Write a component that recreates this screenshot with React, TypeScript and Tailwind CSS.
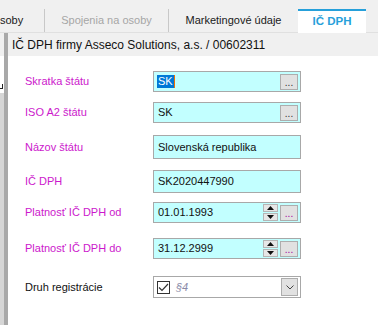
import { ReactNode } from "react";

const font = { fontFamily: '"Liberation Sans", Arial, sans-serif' };

function Dots({ purple }: { purple?: boolean }) {
  return (
    <div className="w-[18px] h-[16px] bg-[#e1e1e1] border border-[#adadad] flex items-end justify-center pb-[2px]">
      <span className={`text-[10px] leading-[8px] ${purple ? "text-[#a000a0]" : "text-[#333]"}`}>...</span>
    </div>
  );
}

function Spinner() {
  return (
    <div className="w-[15px] h-[17px] flex flex-col gap-[1px]">
      <div className="flex-1 bg-[#e6e6e6] border border-[#b5b5b5] flex items-center justify-center">
        <svg width="7" height="4" viewBox="0 0 7 4">
          <path d="M0 4 L3.5 0 L7 4 Z" fill="#111" />
        </svg>
      </div>
      <div className="flex-1 bg-[#e6e6e6] border border-[#b5b5b5] flex items-center justify-center">
        <svg width="7" height="4" viewBox="0 0 7 4">
          <path d="M0 0 L3.5 4 L7 0 Z" fill="#111" />
        </svg>
      </div>
    </div>
  );
}

function Row({
  label,
  black,
  mt,
  h,
  children,
}: {
  label: string;
  black?: boolean;
  mt: string;
  h: string;
  children: ReactNode;
}) {
  return (
    <div className={`flex items-center ${mt}`}>
      <div className={`w-[145px] pl-[17px] text-[11px] ${black ? "text-[#111]" : "text-[#cc18cc]"}`}>
        {label}
      </div>
      <div className={`w-[148px] ${h} border border-[#a8a8a8] flex items-center pl-[3px] pr-[2px] text-[11px] text-[#111]`}>
        {children}
      </div>
    </div>
  );
}

export default function App() {
  return (
    <div className="w-[378px] h-[325px] bg-white overflow-hidden flex flex-col" style={font}>
      {/* tabs */}
      <div className="h-[33px] bg-[#f0f0f0] border-b border-[#e0e0e0] flex items-end text-[11px] shrink-0">
        <div className="w-[44px] h-[23px] flex items-center">
          <span className="text-[#1a1a1a] whitespace-nowrap">soby</span>
        </div>
        <div className="w-[1px] h-[23px] bg-[#c8c8c8]" />
        <div className="w-[123px] h-[23px] flex items-center justify-center text-[#a6a6a6]">Spojenia na osoby</div>
        <div className="w-[1px] h-[23px] bg-[#c8c8c8]" />
        <div className="w-[129px] h-[23px] flex items-center justify-center text-[#1a1a1a]">Marketingové údaje</div>
        <div className="w-[68px] h-[24px] -mb-[1px] bg-white border-t-2 border-[#26a0da] flex items-center justify-center font-bold text-[11.5px] text-[#26a0da]">
          IČ DPH
        </div>
      </div>

      <div className="flex flex-1">
        <div className="w-[4px] flex flex-col">
          <div className="h-[23px] bg-[#f0f0f0]" />
          <div className="h-[37px] bg-white relative">
            <div className="absolute left-0 top-[32px] w-[3px] h-[1px] bg-[#222]" />
            <div className="absolute left-[2px] top-[28px] w-[1px] h-[5px] bg-[#222]" />
          </div>
          <div className="flex-1 bg-[#d6d6d6]" />
        </div>
        <div className="w-[4px] bg-[#a9a9a9]" />
        <div className="flex-1 flex flex-col">
          <div className="h-[23px] bg-[#f0f0f0] flex items-center pl-[4px] text-[12px] text-[#111]">
            IČ DPH firmy Asseco Solutions, a.s. / 00602311
          </div>

          <Row label="Skratka štátu" mt="mt-[15px]" h="h-[21px] bg-[#c2ffff]">
            <span className="bg-[#0078d7] text-white px-[1px] leading-[13px]">SK</span>
            <span className="w-[1px] h-[13px] bg-[#f07000]" />
            <div className="ml-auto">
              <Dots />
            </div>
          </Row>
          <Row label="ISO A2 štátu" mt="mt-[10px]" h="h-[21px] bg-[#c2ffff]">
            <span className="pl-[1px]">SK</span>
            <div className="ml-auto">
              <Dots />
            </div>
          </Row>
          <Row label="Názov štátu" mt="mt-[12px]" h="h-[24px] bg-[#c2ffff]">
            <span className="pl-[1px]">Slovenská republika</span>
          </Row>
          <Row label="IČ DPH" mt="mt-[11px]" h="h-[23px] bg-[#c2ffff]">
            <span className="pl-[1px]">SK2020447990</span>
          </Row>
          <Row label="Platnosť IČ DPH od" mt="mt-[9px]" h="h-[21px] bg-[#c2ffff]">
            <span className="pl-[1px]">01.01.1993</span>
            <div className="ml-auto flex items-center gap-[2px]">
              <Spinner />
              <Dots purple />
            </div>
          </Row>
          <Row label="Platnosť IČ DPH do" mt="mt-[15px]" h="h-[21px] bg-[#c2ffff]">
            <span className="pl-[1px]">31.12.2999</span>
            <div className="ml-auto flex items-center gap-[2px]">
              <Spinner />
              <Dots purple />
            </div>
          </Row>
          <Row label="Druh registrácie" black mt="mt-[17px]" h="h-[22px] bg-white">
            <div className="w-[13px] h-[13px] border border-[#333] bg-white flex items-center justify-center">
              <svg width="11" height="9" viewBox="0 0 11 9">
                <path d="M1 4.5 L4 7.5 L10 1" stroke="#333" strokeWidth="1.2" fill="none" />
              </svg>
            </div>
            <span className="ml-[6px] italic text-[#8a8aa8]">§4</span>
            <div className="ml-auto w-[17px] h-[18px] bg-[#e1e1e1] border border-[#adadad] flex items-center justify-center">
              <svg width="8" height="5" viewBox="0 0 8 5">
                <path d="M0.5 0.5 L4 4 L7.5 0.5" stroke="#444" strokeWidth="1" fill="none" />
              </svg>
            </div>
          </Row>
        </div>
      </div>
    </div>
  );
}
